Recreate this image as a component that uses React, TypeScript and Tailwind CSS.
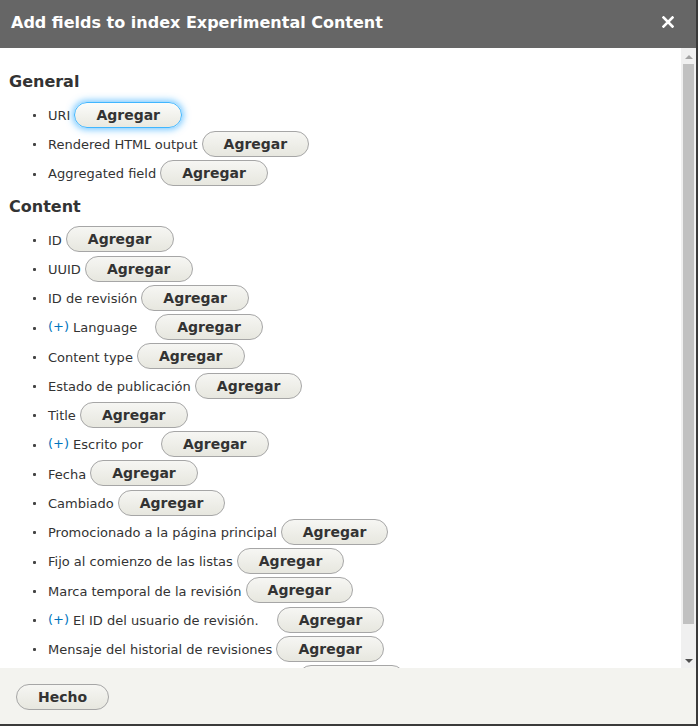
import React from 'react';

type Field = { label: string; plus?: boolean; focus?: boolean };

const general: Field[] = [
  { label: 'URI', focus: true },
  { label: 'Rendered HTML output' },
  { label: 'Aggregated field' },
];

const content: Field[] = [
  { label: 'ID' },
  { label: 'UUID' },
  { label: 'ID de revisión' },
  { label: 'Language', plus: true },
  { label: 'Content type' },
  { label: 'Estado de publicación' },
  { label: 'Title' },
  { label: 'Escrito por', plus: true },
  { label: 'Fecha' },
  { label: 'Cambiado' },
  { label: 'Promocionado a la página principal' },
  { label: 'Fijo al comienzo de las listas' },
  { label: 'Marca temporal de la revisión' },
  { label: 'El ID del usuario de revisión.', plus: true },
  { label: 'Mensaje del historial de revisiones' },
  { label: 'Traducción de revisión afectada', plus: true },
];

function AddButton({ focus, className }: { focus?: boolean; className?: string }) {
  return (
    <button
      className={
        'h-[26px] px-[21px] rounded-full border text-[14px] leading-[16px] font-bold text-[#333] ' +
        (focus
          ? 'border-[#40b6ff] bg-gradient-to-b from-[#fcfcfa] to-[#e9e9e1] shadow-[0_0_7px_1.4px_rgba(51,173,255,0.7)] '
          : 'border-[#a6a6a6] bg-gradient-to-b from-[#f6f6f3] to-[#e7e7df] ') +
        (className ?? '')
      }
    >
      Agregar
    </button>
  );
}

function FieldList({ items }: { items: Field[] }) {
  return (
    <ul>
      {items.map((f) => (
        <li key={f.label} className="h-[29.25px] flex items-center text-[13px] text-[#333]">
          <span className="ml-[24px] mr-[12px] mt-[2px] w-[3px] h-[3px] bg-[#444] rounded-[1px]" />
          {f.plus && <span className="text-[#0074bd] mr-[4px]">(+)</span>}
          <span className="mt-[2px]">{f.label}</span>
          <AddButton focus={f.focus} className={f.plus ? 'ml-[18px]' : 'ml-[4px]'} />
        </li>
      ))}
    </ul>
  );
}

export default function App() {
  return (
    <div className="w-[698px] h-[726px] bg-[#3a3a3a] font-['DejaVu_Sans',sans-serif]">
      <div className="w-[696px] h-[724px] flex flex-col bg-white">
        <div className="h-[48px] shrink-0 bg-[#666] flex items-start justify-between pl-[11px] pr-[22px] pt-[13px]">
          <h2 className="text-white text-[16px] leading-[20px] font-bold">Add fields to index Experimental Content</h2>
          <svg width="12" height="12" viewBox="0 0 12 12" className="mt-[3px]">
            <path d="M1.5 1.5L10.5 10.5M10.5 1.5L1.5 10.5" stroke="white" strokeWidth="2.6" strokeLinecap="square" />
          </svg>
        </div>

        <div className="flex-1 min-h-0 flex">
          <div className="flex-1 overflow-hidden pl-[9px]">
            <h3 className="mt-[24px] mb-[8px] text-[16px] leading-[20px] font-bold text-[#333]">General</h3>
            <FieldList items={general} />
            <h3 className="mt-[9px] mb-[8px] text-[16px] leading-[20px] font-bold text-[#333]">Content</h3>
            <FieldList items={content} />
          </div>
          <div className="w-[15px] shrink-0 bg-[#f0f0f0] flex flex-col items-center">
            <div className="mt-[7px] w-0 h-0 border-l-[4px] border-r-[4px] border-b-[4px] border-l-transparent border-r-transparent border-b-[#a3a3a3]" />
            <div className="mt-[5px] w-[11px] h-[560px] bg-[#c1c1c1]" />
            <div className="mt-auto mb-[5px] w-0 h-0 border-l-[4px] border-r-[4px] border-t-[4px] border-l-transparent border-r-transparent border-t-[#505050]" />
          </div>
        </div>

        <div className="h-[56px] shrink-0 bg-[#f3f3ef] pl-[16px] pt-[16px]">
          <button className="h-[26px] px-[21px] rounded-full border border-[#a6a6a6] bg-gradient-to-b from-[#f6f6f3] to-[#e7e7df] text-[14px] leading-[16px] font-bold text-[#333]">
            Hecho
          </button>
        </div>
      </div>
    </div>
  );
}
